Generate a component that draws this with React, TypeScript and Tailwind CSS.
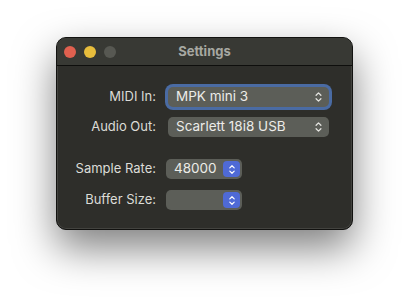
import React from 'react';

function Chevrons({ className = '' }: { className?: string }) {
  return (
    <svg viewBox="0 0 10 14" className={className} fill="none" stroke="currentColor" strokeWidth={1.5} strokeLinecap="round" strokeLinejoin="round">
      <path d="M2.2 5 L5 2.2 L7.8 5" />
      <path d="M2.2 9 L5 11.8 L7.8 9" />
    </svg>
  );
}

function Popup({ value, focused = false }: { value: string; focused?: boolean }) {
  return (
    <div
      className={`flex items-center h-[20px] w-[161px] rounded-[5px] bg-[#5c5e58] pl-[8px] pr-[6px] text-[13.5px] text-[#ececE8] ${
        focused ? 'ring-[3px] ring-[#4a6ba3]' : ''
      }`}
    >
      <span className="flex-1 leading-none">{value}</span>
      <Chevrons className="w-[9px] h-[12px] text-[#e4e4e0]" />
    </div>
  );
}

function Stepper({ value }: { value?: string }) {
  return (
    <div className="flex items-center h-[20px] w-[76px] rounded-[5px] bg-[#5c5e58] pl-[8px] pr-[2px] text-[13.5px] text-[#ececE8]">
      <span className="flex-1 leading-none">{value}</span>
      <div className="flex items-center justify-center w-[17px] h-[16px] rounded-[4px] bg-[#4f6ad6]">
        <Chevrons className="w-[8px] h-[11px] text-white" />
      </div>
    </div>
  );
}

export default function App() {
  return (
    <div className="w-[409px] h-[304px] bg-white pt-[37px] pl-[56px]" style={{ fontFamily: 'Inter, "Liberation Sans", sans-serif' }}>
      <div className="w-[297px] h-[193px] rounded-[10px] border border-[#121210] bg-[#2e2e2a] shadow-[0_18px_40px_rgba(0,0,0,0.5),inset_0_0_0_1px_rgba(255,255,255,0.1)] overflow-hidden flex flex-col">
        <div className="relative h-[28px] flex items-center bg-[#383934] border-b border-[#0e0e0c] shrink-0">
          <div className="flex items-center gap-[8px] pl-[7px]">
            <span className="w-[12px] h-[12px] rounded-full bg-[#e0604f]" />
            <span className="w-[12px] h-[12px] rounded-full bg-[#e8bd3c]" />
            <span className="w-[12px] h-[12px] rounded-full bg-[#575852]" />
          </div>
          <div className="absolute inset-0 flex items-center justify-center text-[13px] font-bold text-[#a7a8a2]">
            Settings
          </div>
        </div>
        <div className="flex flex-col pt-[21px] text-[13px] text-[#dcdcd7]">
          <div className="flex items-center h-[20px]">
            <span className="w-[99px] text-right">MIDI In:</span>
            <div className="ml-[12px]">
              <Popup value="MPK mini 3" focused />
            </div>
          </div>
          <div className="flex items-center h-[20px] mt-[10px]">
            <span className="w-[99px] text-right">Audio Out:</span>
            <div className="ml-[12px]">
              <Popup value="Scarlett 18i8 USB" />
            </div>
          </div>
          <div className="flex items-center h-[20px] mt-[22px]">
            <span className="w-[99px] text-right">Sample Rate:</span>
            <div className="ml-[10px]">
              <Stepper value="48000" />
            </div>
          </div>
          <div className="flex items-center h-[20px] mt-[11px]">
            <span className="w-[99px] text-right">Buffer Size:</span>
            <div className="ml-[10px]">
              <Stepper />
            </div>
          </div>
        </div>
      </div>
    </div>
  );
}
